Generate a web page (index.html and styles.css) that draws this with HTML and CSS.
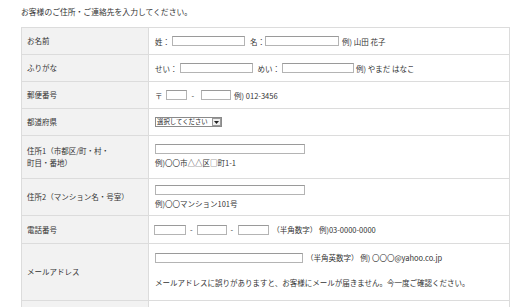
FILE: index.html
```html
<!DOCTYPE html>
<html lang="ja">
<head>
<meta charset="utf-8">
<link rel="stylesheet" href="styles.css">
</head>
<body>
<p class="lead">お客様のご住所・ご連絡先を入力してください。</p>
<div class="form">
  <div class="lbl">お名前</div>
  <div class="val">
    <span class="t">姓：</span><span class="inp w73 ml2"></span><span class="t ml5">名：</span><span class="inp w74"></span><span class="t ml3">例) 山田 花子</span>
  </div>

  <div class="lbl">ふりがな</div>
  <div class="val">
    <span class="t">せい：</span><span class="inp w73 ml2"></span><span class="t ml5">めい：</span><span class="inp w72 ml2"></span><span class="t ml2">例) やまだ はなこ</span>
  </div>

  <div class="lbl">郵便番号</div>
  <div class="val">
    <span class="t">〒</span><span class="inp w21 ml3"></span><span class="t dash">-</span><span class="inp w30"></span><span class="t ml3">例) 012-3456</span>
  </div>

  <div class="lbl">都道府県</div>
  <div class="val">
    <span class="sel"><span class="sel-text">選択してください</span><span class="sel-btn"><svg width="5" height="3" viewBox="0 0 5 3"><path d="M0 0H5L2.5 3Z" fill="#222"/></svg></span></span>
  </div>

  <div class="lbl">住所1（市都区/町・村・<br>町目・番地）</div>
  <div class="val col pt6">
    <div class="line"><span class="inp w150"></span></div>
    <div class="line"><span class="t">例)〇〇市△△区□町1-1</span></div>
  </div>

  <div class="lbl">住所2（マンション名・号室）</div>
  <div class="val col pt3">
    <div class="line"><span class="inp w150"></span></div>
    <div class="line"><span class="t">例)〇〇マンション101号</span></div>
  </div>

  <div class="lbl">電話番号</div>
  <div class="val">
    <span class="inp w32 mlm1"></span><span class="t dash2">-</span><span class="inp w30"></span><span class="t dash3">-</span><span class="inp w31"></span><span class="t ml3">（半角数字） 例)03-0000-0000</span>
  </div>

  <div class="lbl">メールアドレス</div>
  <div class="val col pt7 gap12">
    <div class="line"><span class="inp w148"></span><span class="t ml3">（半角英数字） 例) 〇〇〇@yahoo.co.jp</span></div>
    <div class="line"><span class="t">メールアドレスに誤りがありますと、お客様にメールが届きません。今一度ご確認ください。</span></div>
  </div>

  <div class="lbl"></div>
  <div class="val"></div>
</div>
</body>
</html>
```

FILE: styles.css
```css
html, body {
  margin: 0;
  padding: 0;
  background: #fff;
}
body {
  font-family: "Noto Sans CJK JP", "Noto Sans", sans-serif;
  font-size: 7.5px;
  color: #333;
  padding: 0 20px 0 21px;
}
.lead {
  margin: 0;
  padding-top: 5px;
  height: 22px;
  line-height: 13px;
  font-size: 7.8px;
}
.form {
  display: grid;
  grid-template-columns: 126px 1fr;
  grid-template-rows: 26px 26px 26px 26px 42px 36px 27px 56px 30px;
  gap: 1px;
  padding: 1px;
  background: #dcdcdc;
  width: 487px;
}
.lbl {
  background: #f2f2f2;
  padding-left: 5px;
  display: flex;
  align-items: center;
  line-height: 12px;
}
.val {
  background: #fff;
  padding-left: 6px;
  display: flex;
  align-items: center;
  line-height: 13px;
}
.val.col {
  flex-direction: column;
  align-items: flex-start;
  justify-content: flex-start;
  gap: 1px;
}
.pt6 { padding-top: 6px; }
.pt3 { padding-top: 4px; }
.pt7 { padding-top: 7px; }
.val.gap12 { gap: 12px; }
.line {
  display: flex;
  align-items: center;
  height: 13px;
}
.t { white-space: nowrap; }
.inp {
  display: inline-block;
  box-sizing: border-box;
  height: 10px;
  border: 1px solid #b4b4b4;
  border-top-color: #9a9a9a;
  background: #fff;
  flex: none;
}
.w21 { width: 21px; }
.w30 { width: 30px; }
.w31 { width: 31px; }
.w32 { width: 32px; }
.w72 { width: 72px; }
.w73 { width: 73px; }
.w74 { width: 74px; }
.w148 { width: 148px; }
.w150 { width: 150px; }
.ml2 { margin-left: 2px; }
.ml3 { margin-left: 3px; }
.ml5 { margin-left: 5px; }
.mlm1 { margin-left: -1px; }
.dash { margin: 0 7px 0 5px; }
.dash2 { margin: 0 4px 0 4px; }
.dash3 { margin: 0 5px 0 4px; }
.sel {
  display: inline-flex;
  box-sizing: border-box;
  width: 67px;
  height: 10px;
  border: 1px solid #8a8a8a;
  background: #fff;
  align-items: center;
}
.sel-text {
  flex: 1;
  padding-left: 1px;
  font-size: 6.4px;
  line-height: 8px;
  color: #222;
  white-space: nowrap;
  overflow: hidden;
}
.sel-btn {
  box-sizing: border-box;
  width: 9px;
  height: 8px;
  margin-right: 0;
  border: 1px solid #9a9a9a;
  background: #f0f0f0;
  display: flex;
  align-items: center;
  justify-content: center;
}
```
